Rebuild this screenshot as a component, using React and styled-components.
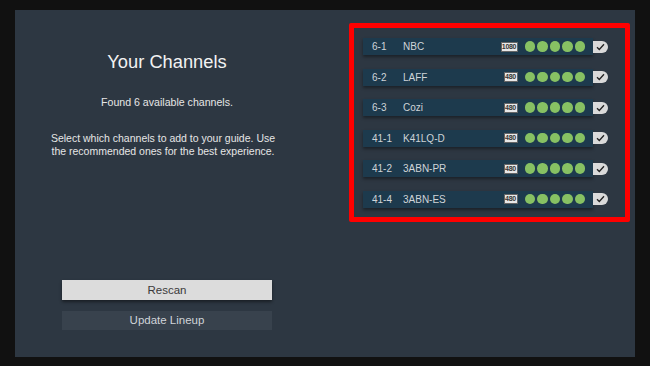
import React from "react";
import styled, { createGlobalStyle } from "styled-components";

const Global = createGlobalStyle`
  html, body { margin: 0; padding: 0; background: #111111; }
  body { font-family: "Liberation Sans", Arial, sans-serif; }
`;

const Frame = styled.div`
  width: 650px;
  height: 366px;
  box-sizing: border-box;
  padding: 10px 15px 9px 15px;
  background: #111111;
`;

const Panel = styled.div`
  width: 100%;
  height: 100%;
  background: #2d3742;
  display: flex;
  box-sizing: border-box;
`;

const LeftColumn = styled.div`
  width: 304px;
  flex: none;
  display: flex;
  flex-direction: column;
  align-items: center;
  padding: 41px 0 27px;
  box-sizing: border-box;
`;

const Title = styled.h1`
  margin: 0;
  font-size: 18.3px;
  line-height: 22px;
  font-weight: 400;
  color: #f2f2f2;
`;

const Found = styled.p`
  margin: 23px 0 0;
  font-size: 10.6px;
  line-height: 13px;
  color: #e6e6e6;
`;

const Instructions = styled.p`
  margin: 23px 0 0;
  width: 240px;
  font-size: 10.5px;
  line-height: 12.7px;
  color: #e6e6e6;
  text-align: center;
  transform: translateX(-4px);
`;

const Buttons = styled.div`
  margin-top: auto;
  display: flex;
  flex-direction: column;
  gap: 10.5px;
`;

const Button = styled.div`
  width: 210px;
  height: ${(p) => (p.$primary ? "20px" : "19.5px")};
  display: flex;
  align-items: center;
  justify-content: center;
  font-size: 11.5px;
  background: ${(p) => (p.$primary ? "#dcdcdc" : "#38424d")};
  color: ${(p) => (p.$primary ? "#3a3a3a" : "#d0d4d8")};
  box-shadow: ${(p) => (p.$primary ? "0 2px 3px rgba(0,0,0,0.45)" : "none")};
`;

const Highlight = styled.div`
  margin: 13px 0 0 30px;
  width: 281px;
  height: 199px;
  box-sizing: border-box;
  border: 5px solid #ff0000;
  border-radius: 2px;
  padding: 10px 0 0 9px;
  display: flex;
  flex-direction: column;
  gap: 13.5px;
`;

const RowWrap = styled.div`
  display: flex;
  align-items: center;
`;

const Row = styled.div`
  width: 230px;
  height: 17px;
  background: #1d3a4d;
  display: flex;
  align-items: center;
  padding: 0 8px 0 9px;
  box-sizing: border-box;
  box-shadow: 0 2px 3px rgba(0, 0, 0, 0.4);
  font-size: 10px;
  color: #cfd4d8;
`;

const Number = styled.span`
  width: 31px;
  flex: none;
`;

const Name = styled.span`
  flex: 1;
`;

const Badge = styled.span`
  width: ${(p) => p.$w}px;
  height: 10px;
  flex: none;
  box-sizing: border-box;
  background: #e8e8e8;
  border: 1px solid #666;
  color: #333;
  font-size: 7px;
  font-weight: 700;
  line-height: 8px;
  text-align: center;
  letter-spacing: -0.3px;
  margin-right: 7px;
`;

const Dots = styled.div`
  display: flex;
  gap: 2px;
  flex: none;
`;

const Dot = styled.span`
  width: 10.5px;
  height: 10.5px;
  flex: none;
  border-radius: 50%;
  background: #87c163;
`;

const Check = styled.div`
  width: 15px;
  height: 12px;
  background: #dadada;
  border-radius: 0 6px 6px 0;
  display: flex;
  align-items: center;
  justify-content: center;
`;

const channels = [
  ["6-1", "NBC", "1080"],
  ["6-2", "LAFF", "480"],
  ["6-3", "Cozi", "480"],
  ["41-1", "K41LQ-D", "480"],
  ["41-2", "3ABN-PR", "480"],
  ["41-4", "3ABN-ES", "480"],
];

function CheckMark() {
  return (
    <svg width="9" height="8" viewBox="0 0 9 8">
      <path d="M1 4.2 L3.3 6.5 L8 1.2" fill="none" stroke="#222" strokeWidth="1.3" />
    </svg>
  );
}

export default function App() {
  return (
    <>
      <Global />
      <Frame>
        <Panel>
          <LeftColumn>
            <Title>Your Channels</Title>
            <Found>Found 6 available channels.</Found>
            <Instructions>
              Select which channels to add to your guide. Use the recommended ones for the best experience.
            </Instructions>
            <Buttons>
              <Button $primary>Rescan</Button>
              <Button>Update Lineup</Button>
            </Buttons>
          </LeftColumn>
          <Highlight>
            {channels.map(([num, name, res]) => (
              <RowWrap key={num}>
                <Row>
                  <Number>{num}</Number>
                  <Name>{name}</Name>
                  <Badge $w={res === "1080" ? 17 : 14}>{res}</Badge>
                  <Dots>
                    {[0, 1, 2, 3, 4].map((i) => (
                      <Dot key={i} />
                    ))}
                  </Dots>
                </Row>
                <Check>
                  <CheckMark />
                </Check>
              </RowWrap>
            ))}
          </Highlight>
        </Panel>
      </Frame>
    </>
  );
}
